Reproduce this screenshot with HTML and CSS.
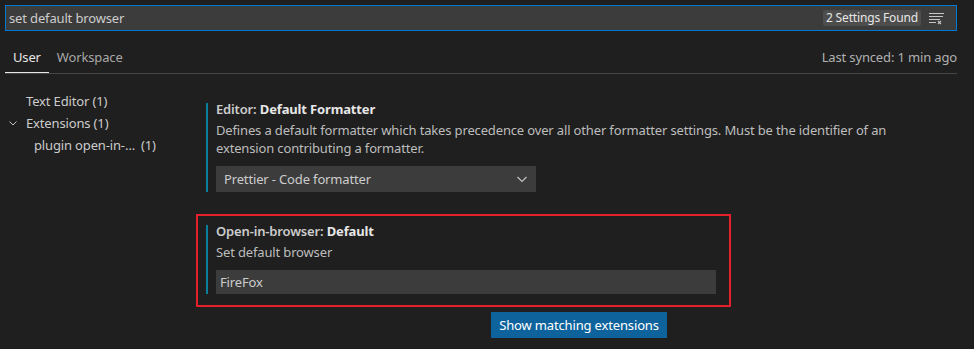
FILE: index.html
```html
<!DOCTYPE html>
<html lang="en">
<head>
  <meta charset="UTF-8" />
  <title>Settings</title>
  <link rel="stylesheet" href="styles.css">
</head>
<body>
  <div class="search">
    <span class="query">set default browser</span>
    <span class="badge">2 Settings Found</span>
    <svg class="clear" width="16" height="16" viewBox="0 0 16 16">
      <path d="M1 3.5h15M1 6.5h14M1 9.5h11M1 12.5h7" stroke="#c5c5c5" stroke-width="1" fill="none"/>
      <path d="M10 11l3 3M13 11l-3 3" stroke="#c5c5c5" stroke-width="1.1" fill="none"/>
    </svg>
  </div>

  <div class="tabs">
    <span class="tab active">User</span>
    <span class="tab">Workspace</span>
    <span class="synced">Last synced: 1 min ago</span>
  </div>

  <div class="main">
    <div class="tree">
      <div class="node">Text Editor (1)</div>
      <div class="node open">
        <svg class="chevron" width="10" height="10" viewBox="0 0 10 10">
          <path d="M1.5 3.5l3.5 3.5 3.5-3.5" stroke="#c5c5c5" stroke-width="1" fill="none"/>
        </svg>
        Extensions (1)
      </div>
      <div class="node child">plugin open-in-… <span class="count">(1)</span></div>
    </div>

    <div class="content">
      <div class="setting">
        <div class="inner">
          <div class="title"><span class="cat">Editor: </span><b>Default Formatter</b></div>
          <div class="desc">Defines a default formatter which takes precedence over all other formatter settings. Must be the identifier of an extension contributing a formatter.</div>
          <div class="select">
            <span>Prettier - Code formatter</span>
            <svg width="16" height="16" viewBox="0 0 16 16">
              <path d="M3.5 6l4.5 4.5 4.5-4.5" stroke="#c5c5c5" stroke-width="1.1" fill="none"/>
            </svg>
          </div>
        </div>
      </div>

      <div class="setting focused">
        <div class="inner">
          <div class="title"><span class="cat">Open-in-browser: </span><b>Default</b></div>
          <div class="desc">Set default browser</div>
          <div class="input">FireFox</div>
        </div>
      </div>

      <div class="actions">
        <button class="btn">Show matching extensions</button>
      </div>
    </div>
  </div>
</body>
</html>
```

FILE: styles.css
```css
body {
  margin: 0;
  background: #1f1f1f;
  color: #cccccc;
  font-family: 'Noto Sans', sans-serif;
  font-size: 13px;
  letter-spacing: -0.15px;
  width: 974px;
  height: 349px;
  overflow: hidden;
}

.search {
  margin: 5px 17px 0 5px;
  height: 24px;
  border: 1px solid #0078d4;
  background: #3c3c3c;
  display: flex;
  align-items: center;
  padding: 0 12px 0 3px;
}

.query {
  flex: 1;
  color: #cccccc;
}

.badge {
  background: #4d4d4d;
  color: #e7e7e7;
  font-size: 12px;
  line-height: 16px;
  padding: 0 3px;
  border-radius: 2px;
  margin-right: 7px;
}

.tabs {
  margin: 11px 17px 0 5px;
  height: 31px;
  border-bottom: 1px solid #454545;
  display: flex;
  align-items: stretch;
}

.tab {
  line-height: 31px;
  padding: 0 8px;
  color: #a8a8a8;
}

.tab.active {
  color: #e7e7e7;
  box-shadow: inset 0 -1px 0 #e7e7e7;
}

.synced {
  margin-left: auto;
  line-height: 31px;
  color: #b0b0b0;
}

.main {
  display: flex;
}

.tree {
  width: 196px;
  padding-top: 16px;
}

.node {
  height: 22px;
  line-height: 22px;
  padding-left: 26px;
  display: flex;
  align-items: center;
}

.node.open {
  padding-left: 8px;
}

.chevron {
  margin-right: 8px;
}

.node.child {
  padding-left: 34px;
}

.count {
  margin-left: 6px;
}

.content {
  flex: 1;
  padding: 18px 12px 0 0;
}

.setting {
  width: 510px;
  border: 2px solid transparent;
  padding: 9px 13px 11px 8px;
  margin-bottom: 9px;
}

.setting.focused {
  border-color: #e51f2c;
  margin-bottom: 5px;
}

.inner {
  border-left: 2px solid #0c7d9d;
  padding-left: 8px;
}

.title {
  line-height: 12px;
  color: #cccccc;
}

.cat {
  font-weight: 600;
}

.title b {
  color: #e7e7e7;
}

.desc {
  margin-top: 6px;
  line-height: 18px;
  width: 690px;
  color: #bdbdbd;
}

.setting.focused .desc {
  width: auto;
}

.select {
  margin-top: 9px;
  width: 306px;
  height: 26px;
  background: #3c3c3c;
  display: flex;
  align-items: center;
  justify-content: space-between;
  padding: 0 6px 0 8px;
  color: #cccccc;
}

.input {
  margin-top: 9px;
  height: 24px;
  line-height: 24px;
  background: #3c3c3c;
  padding: 0 4px;
  color: #cccccc;
}

.actions {
  display: flex;
  padding-left: 295px;
}

.btn {
  width: 176px;
  height: 26px;
  background: #0e639c;
  color: #ffffff;
  border: none;
  font-family: 'Noto Sans', sans-serif;
  font-size: 13px;
  letter-spacing: -0.15px;
  padding: 0;
}
```
